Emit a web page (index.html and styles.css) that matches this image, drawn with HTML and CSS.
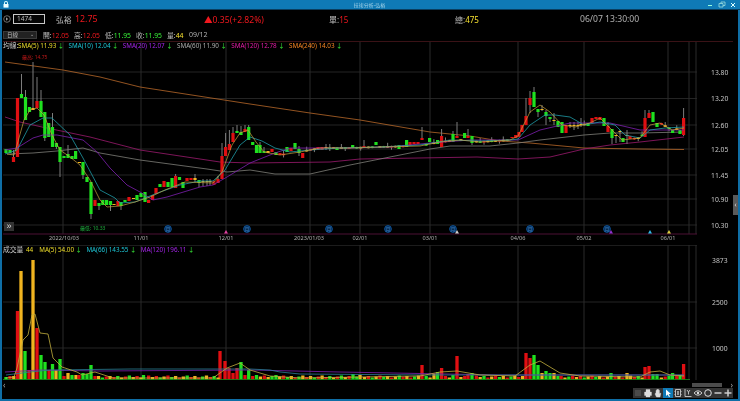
FILE: index.html
```html
<!DOCTYPE html>
<html lang="zh-Hant">
<head>
<meta charset="utf-8">
<title>技術分析-弘裕</title>
<link rel="stylesheet" href="styles.css">
</head>
<body>
<div class="window">
  <header class="titlebar">
    <svg class="lock" viewBox="0 0 6 7"><path d="M1 3V2a2 2 0 0 1 4 0v1h-1V2a1 1 0 0 0-2 0v1z" fill="#dff"/><rect x="0.5" y="3" width="5" height="3.6" fill="#eff"/></svg>
    <span class="title-text">技術分析-弘裕</span>
    <div class="winctl">
      <svg viewBox="0 0 30 8"><path d="M2 4.5h4" stroke="#9fd" stroke-width="1"/><path d="M13 2.5h4v3.5h-4zM15 2.5v-1.500h4v3.500h-2" fill="none" stroke="#9dd" stroke-width=".8"/><path d="M25 2l4 4M29 2l-4 4" stroke="#dff" stroke-width="1"/></svg>
    </div>
  </header>

  <section class="quote">
    <svg class="refresh" viewBox="0 0 8 8"><circle cx="4" cy="4" r="3.300" fill="none" stroke="#999" stroke-width=".7"/><path d="M3 2.300l2.200 1.700-2.200 1.700z" fill="#999"/></svg>
    <div class="code">1474</div>
    <span class="name">弘裕</span>
    <span class="price up">12.75</span>
    <span class="change up">▲0.35(+2.82%)</span>
    <span class="single"><i>單:</i><b class="up">15</b></span>
    <span class="total"><i>總:</i><b class="yellow">475</b></span>
    <span class="clock">06/07 13:30:00</span>
  </section>

  <section class="ohlc">
    <div class="period"><span>日線</span><em>⌄</em></div>
    <span class="o"><i>開:</i><b class="up">12.05</b></span>
    <span class="o"><i>高:</i><b class="up">12.05</b></span>
    <span class="o"><i>低:</i><b class="down">11.95</b></span>
    <span class="o"><i>收:</i><b class="down">11.95</b></span>
    <span class="o vol"><i>量:</i><b class="yellow">44</b></span>
    <span class="date">09/12</span>
  </section>

  <section class="pane price-pane">
    <svg id="price" class="chart" viewBox="2 41 736 204"></svg>
    <div class="legend price-legend">
      <span class="cap">均線:</span>
      <span class="c-y">SMA(5) 11.93<u>↓</u></span>
      <span class="c-c">SMA(10) 12.04<u>↓</u></span>
      <span class="c-p">SMA(20) 12.07<u>↓</u></span>
      <span class="c-g">SMA(60) 11.90<u>↓</u></span>
      <span class="c-m">SMA(120) 12.78<u>↓</u></span>
      <span class="c-o">SMA(240) 14.03<u>↓</u></span>
    </div>
    <button class="expand">»</button>
    <div class="vscroll">‹</div>
  </section>

  <section class="pane volume-pane">
    <svg id="volume" class="chart" viewBox="2 245 736 136"></svg>
    <div class="legend volume-legend">
      <span class="cap">成交量</span>
      <span class="c-y vol-now">44</span>
      <span class="c-y">MA(5) 54.00<u>↓</u></span>
      <span class="c-c">MA(66) 143.55<u>↓</u></span>
      <span class="c-p">MA(120) 196.11<u>↓</u></span>
    </div>
  </section>

  <footer class="bottom">
    <div class="scrollrow">
      <span class="sc-arrow">‹</span>
      <span class="thumb"></span>
      <span class="sc-arrow right">›</span>
    </div>
    <div class="toolrow">
      <div class="tools">
        <span class="tool"><svg viewBox="0 0 10 10"><rect x="2" y="2" width="6" height="6" fill="#4a4a4a"/></svg></span>
        <span class="tool"><svg viewBox="0 0 10 10"><path d="M3 4V1.500h4V4M1.500 4h7v3.500h-7zM3 6.500h4v2.500H3z" fill="#ddd" stroke="#ddd" stroke-width=".3"/></svg></span>
        <span class="tool"><svg viewBox="0 0 10 10"><path d="M3 5V2.500h.8V5V1.500h.9V5V1.500h.9V5V2.200h.8V6l.8-1 .6.400L7 9H3.500L2 6l.5-.8z" fill="#ddd" stroke="#ddd" stroke-width=".4"/></svg></span>
        <span class="tool active"><svg viewBox="0 0 10 10"><path d="M3 1.500v6.500l1.600-1.500L6 9l1-.5-1.300-2.500H8z" fill="#fff"/></svg></span>
        <span class="tool"><svg viewBox="0 0 10 10"><path d="M2.500 1.500h5v7h-5zM1.500 3.500h1M1.500 6.500h1M7.500 3.500h1M7.500 6.500h1" fill="none" stroke="#ccc" stroke-width=".9"/><rect x="4" y="3" width="2" height="4" fill="#999"/></svg></span>
        <span class="tool"><svg viewBox="0 0 10 10"><path d="M2 1v7.500h6.500M4 2l1.500 2L7 2M5.500 4v2.500" fill="none" stroke="#ccc" stroke-width=".9"/></svg></span>
        <span class="tool"><svg viewBox="0 0 10 10"><path d="M1 5q4-4.500 8 0q-4 4.500-8 0z" fill="none" stroke="#ddd" stroke-width=".9"/><circle cx="5" cy="5" r="1.200" fill="#ddd"/></svg></span>
        <span class="tool"><svg viewBox="0 0 10 10"><circle cx="5" cy="5" r="3.300" fill="none" stroke="#ddd" stroke-width="1"/></svg></span>
        <span class="tool"><svg viewBox="0 0 10 10"><path d="M1.500 5h7" stroke="#ccc" stroke-width="1.500"/></svg></span>
        <span class="tool"><svg viewBox="0 0 10 10"><path d="M1.500 5h7M5 1.500v7" stroke="#ccc" stroke-width="1.500"/></svg></span>
      </div>
    </div>
  </footer>
</div>
<script src="chart.js"></script>
</body>
</html>
```

FILE: styles.css
```css
* { box-sizing: border-box; }
html, body { margin: 0; padding: 0; background: #000; }
body { width: 740px; height: 401px; overflow: hidden; }

.window {
  width: 740px;
  height: 401px;
  display: flex;
  flex-direction: column;
  background: #000;
  border-left: 2px solid #0f6ea6;
  border-right: 2px solid #0f6ea6;
  border-bottom: 2px solid #0f6ea6;
  font-family: "Noto Sans", "Noto Sans CJK TC", sans-serif;
  color: #bcbcbc;
  filter: blur(0.3px);
}

i, b, u, em { font-style: normal; font-weight: normal; text-decoration: none; }
.up { color: #f0181e; }
.down { color: #38f038; }
.yellow { color: #f5e030; }

.titlebar {
  flex: 0 0 10px;
  margin: 0 -2px;
  padding: 0 4px 0 3px;
  display: grid;
  grid-template-columns: 1fr auto 1fr;
  align-items: center;
  background: #0f7ab6;
  border-bottom: 1px solid #0a3f60;
}
.lock { width: 6px; height: 7px; }
.title-text { font-size: 5px; line-height: 8px; color: #a0d0e6; }
.winctl { justify-self: end; }
.winctl svg { display: block; width: 30px; height: 8px; }

.quote {
  flex: 0 0 18px;
  display: flex;
  align-items: center;
  font-size: 8px;
}
.refresh { width: 8px; height: 8px; margin-left: 1px; flex: none; }
.code {
  width: 32px;
  height: 10px;
  margin-left: 2px;
  border: 1px solid #c8c8c8;
  background: #050505;
  color: #bbb;
  font-size: 6.500px;
  line-height: 8px;
  padding-left: 3px;
}
.name { margin-left: 11px; width: 19px; color: #bcbcbc; font-size: 7.800px; }
.price { width: 129px; font-size: 8.800px; }
.change { width: 125px; font-size: 8.600px; }
.single { width: 126px; }
.total { width: 125px; }
.clock { font-size: 8.600px; color: #b0b0b0; }

.ohlc {
  flex: 0 0 13px;
  display: flex;
  align-items: center;
  font-size: 6.800px;
  padding-left: 1px;
}
.period {
  width: 34px;
  height: 8px;
  margin-right: 6px;
  padding: 0 2px 0 3px;
  display: flex;
  justify-content: space-between;
  align-items: center;
  background: #222;
  border: 1px solid #3a3a3a;
  font-size: 5.500px;
  color: #bbb;
}
.period em { font-size: 5px; line-height: 5px; }
.o { width: 31px; white-space: nowrap; }
.o.vol { width: 22px; }
.date { font-size: 7px; color: #b0b0b0; }

.pane { position: relative; flex: none; }
.price-pane { height: 204px; }
.volume-pane { height: 136px; }
.chart { display: block; width: 736px; height: 100%; }
.ax { font-size: 6.800px; fill: #c4c4c4; }
.xl { font-size: 5.600px; fill: #b0b0b0; text-anchor: middle; }
.tiny { font-size: 5px; }

.legend {
  position: absolute;
  left: 1px;
  top: 0;
  display: flex;
  align-items: center;
  font-size: 6.300px;
  line-height: 10px;
  white-space: nowrap;
}
.legend span { margin-right: 4.500px; }
.legend .cap { margin-right: 0; color: #c8c8c8; font-size: 6.800px; width: 15px; }
.legend u { color: #38f038; margin-left: 1.500px; }
.volume-legend .cap { width: 23px; }
.volume-legend .vol-now { margin-right: 6px; }
.c-y { color: #ecdc2a; }
.c-c { color: #1cc4d4; }
.c-p { color: #a424e8; }
.c-g { color: #ababab; }
.c-m { color: #e61ca6; }
.c-o { color: #f58422; }

.expand {
  position: absolute;
  left: 2px;
  top: 181px;
  width: 10px;
  height: 9px;
  padding: 0;
  border: 0;
  background: #333;
  color: #ddd;
  font-size: 9px;
  line-height: 7px;
}
.vscroll {
  position: absolute;
  right: 0;
  top: 154px;
  width: 5px;
  height: 20px;
  background: #5a5a5a;
  color: #ddd;
  font-size: 7px;
  line-height: 20px;
  text-align: center;
}

.bottom { flex: 1; display: flex; flex-direction: column; min-height: 0; }
.scrollrow {
  flex: 0 0 7px;
  display: flex;
  align-items: center;
  padding-left: 1px;
  font-size: 8px;
  line-height: 7px;
  color: #aaa;
}
.thumb { width: 30px; height: 4px; margin-left: auto; background: #4c4c4c; }
.sc-arrow.right { margin-left: 9px; margin-right: 5px; }
.toolrow { flex: 1; display: flex; justify-content: flex-end; padding-right: 5px; }
.tools { display: flex; height: 10px; background: #333; }
.tool { width: 10px; height: 10px; display: block; }
.tool svg { display: block; width: 10px; height: 10px; }
.tool.active { background: #0f7ab6; }
```

FILE: chart.js
```js
(function () {
  var NS = "http://www.w3.org/2000/svg";
  var X0 = 6, STEP = 3.855, N = 177;
  var COL = { r: "#e00f12", g: "#1fe01f", o: "#f0b420", d: "#a81010" };

  function el(parent, tag, attrs, text) {
    var e = document.createElementNS(NS, tag);
    for (var k in attrs) e.setAttribute(k, attrs[k]);
    if (text) e.textContent = text;
    parent.appendChild(e);
    return e;
  }
  function line(svg, x1, y1, x2, y2, c, w) {
    el(svg, "line", { x1: x1, y1: y1, x2: x2, y2: y2, stroke: c, "stroke-width": w || 1 });
  }
  function poly(svg, pts, c, w) {
    el(svg, "polyline", {
      points: pts.map(function (p) { return p.join(","); }).join(" "),
      fill: "none", stroke: c, "stroke-width": w || 0.8, "stroke-linejoin": "round"
    });
  }
  function interp(pts, x) {
    for (var i = 1; i < pts.length; i++) {
      if (x <= pts[i][0]) {
        var a = pts[i - 1], b = pts[i];
        return a[1] + (b[1] - a[1]) * (x - a[0]) / (b[0] - a[0]);
      }
    }
    return pts[pts.length - 1][1];
  }

  var VX = [63, 141, 226, 310, 360, 430, 518, 584, 668, 689, 696];
  var XLABELS = [[64, "2022/10/03"], [141, "11/01"], [226, "12/01"], [309, "2023/01/03"], [360, "02/01"], [430, "03/01"], [518, "04/06"], [584, "05/02"], [668, "06/01"]];

  /* moving averages, in page pixels */
  var SMA240 = [[5, 62], [63, 70], [100, 77], [140, 87], [250, 104], [310, 113], [360, 120], [430, 132], [470, 136], [500, 141], [530, 143], [584, 148], [640, 149], [684, 149.5]];
  var SMA120 = [[5, 117], [20, 122], [42, 127], [90, 137], [140, 150], [220, 162], [250, 163], [330, 162], [360, 159], [477, 157], [518, 159], [550, 157], [584, 149], [610, 145], [640, 142], [684, 137]];
  var SMA60 = [[7, 154], [33, 153], [57, 151], [83, 148], [100, 153], [140, 160], [207, 169], [227, 172], [250, 170], [275, 174], [310, 174], [350, 165], [430, 149], [450, 146], [490, 146], [518, 143], [540, 140], [584, 135], [610, 133], [640, 133], [684, 132]];
  var SMA20 = [[5, 150], [17, 148], [33, 138], [43, 135], [57, 135], [83, 140], [97, 152], [110, 168], [127, 185], [140, 192], [153, 200], [167, 197], [200, 187], [213, 185], [227, 177], [250, 163], [275, 153], [290, 148], [350, 148], [390, 147], [430, 143], [470, 140], [518, 140], [540, 130], [570, 123], [610, 123], [640, 130], [660, 130], [684, 130]];
  var SMA10 = [[5, 154], [17, 150], [30, 125], [43, 118], [52, 118], [70, 135], [83, 158], [100, 190], [115, 198], [120, 203], [135, 202], [160, 192], [180, 185], [200, 181], [213, 181], [225, 170], [240, 145], [250, 137], [262, 141], [275, 148], [290, 152], [310, 150], [340, 148], [380, 147], [420, 145], [450, 140], [480, 141], [510, 140], [518, 139], [530, 125], [545, 115], [555, 115], [570, 117], [584, 125], [600, 122], [615, 125], [625, 135], [640, 138], [650, 130], [665, 128], [684, 127]];
  var SMA5 = [[7, 154], [14, 155], [17, 145], [24, 120], [30, 110], [37, 108], [44, 115], [52, 135], [60, 150], [70, 157], [80, 165], [90, 180], [100, 200], [107, 207], [120, 206], [135, 202], [150, 197], [165, 190], [185, 182], [213, 183], [222, 172], [232, 145], [240, 133], [248, 130], [256, 142], [264, 152], [280, 155], [300, 152], [320, 148], [350, 148], [380, 147], [420, 146], [440, 142], [460, 140], [480, 142], [510, 140], [518, 136], [530, 112], [540, 105], [550, 112], [562, 125], [575, 127], [590, 123], [600, 118], [612, 130], [622, 140], [640, 138], [650, 125], [660, 123], [672, 130], [684, 128]];

  /* candles: x, colour, body top, body bottom, wick top, wick bottom */
  var CANDLES = [
    [6, "g", 149, 153], [10, "g", 150, 153], [13.5, "r", 157, 162, 150, 162], [17.5, "r", 98, 157],
    [21.5, "g", 94, 98, 74, 98], [25.5, "g", 97, 120, 90, 120], [29.5, "g", 107, 112], [33, "o", 108, 110, 62, 110],
    [37, "r", 101, 108, 77, 108], [41, "g", 101, 117, 90, 117], [44.8, "g", 112, 138, 112, 141], [48.7, "g", 123, 137],
    [52.5, "g", 127, 147, 113, 147], [56.4, "g", 143, 147, 143, 149], [60, "g", 147, 162, 147, 177], [64, "g", 156, 158],
    [68, "g", 154, 158, 145, 158], [72, "g", 156, 159], [75.6, "g", 151, 159], [79.5, "o", 162, 163], [83, "g", 162, 175, 162, 179],
    [87, "g", 177, 182], [91, "g", 182, 214, 182, 219], [95, "r", 200, 206], [99, "g", 203, 206, 203, 210], [102.8, "g", 200, 205],
    [106.6, "g", 200, 205], [110.5, "g", 201, 205, 201, 211], [114, "o", 204, 205], [118, "r", 201, 206], [121, "g", 202, 206, 202, 210],
    [125, "g", 200, 202], [129, "r", 197, 201], [133.6, "o", 198, 199], [137, "g", 195, 200], [141, "g", 193, 197], [145, "g", 192, 202],
    [148.6, "r", 200, 203], [152.6, "r", 195, 200], [156, "r", 188, 194], [160, "g", 184, 187], [164, "r", 181, 187], [168, "g", 182, 187],
    [172, "g", 178, 187], [175.6, "r", 176, 188, 174, 188], [179.5, "g", 177, 180], [183, "g", 182, 188], [187, "r", 178, 181],
    [191, "r", 178, 180], [195, "o", 178, 180, 174, 182], [199, "g", 180, 183, 180, 187], [203, "o", 181, 182, 179, 186], [207, "o", 181, 182, 179, 186],
    [210, "o", 181, 182, 179, 185], [214, "d", 181, 185], [218, "r", 179, 183, 176, 183], [222, "r", 156, 179, 143, 179], [225.6, "r", 147, 156, 133, 156],
    [229.4, "r", 144, 150, 130, 150], [233, "r", 133, 142, 127, 142], [237, "g", 131, 133, 125, 133], [241, "g", 132, 135, 126, 135], [245, "r", 129, 132, 125, 132],
    [248.7, "g", 127, 140, 125, 140], [252.7, "g", 142, 145], [256.5, "g", 145, 153], [260, "g", 145, 153, 142, 153], [264, "g", 151, 153, 147, 153],
    [268, "o", 151, 153], [272, "r", 149, 152], [276, "g", 152, 155], [280, "r", 153, 155], [287, "g", 147, 152], [291, "r", 148, 151],
    [295, "g", 143, 149], [299, "g", 149, 153, 146, 156], [302.7, "r", 153, 158], [318, "r", 147, 150], [322, "r", 147, 150], [326, "o", 147, 148, 144, 150],
    [337, "g", 147, 150], [352.7, "g", 145, 148], [364, "r", 146, 148, 140, 148], [376, "g", 142, 145], [399, "g", 145, 149], [406.6, "g", 140, 147],
    [410, "r", 142, 145], [414, "r", 142, 144], [418, "r", 142, 144], [422, "r", 138, 140, 127, 140], [429.6, "g", 138, 142], [437.6, "g", 140, 144],
    [441.6, "r", 136, 147, 129, 147], [453, "g", 134, 142, 131, 142], [457, "r", 136, 138, 122, 138], [464.6, "g", 133, 138], [468, "r", 136, 138, 129, 138],
    [472, "g", 136, 143, 136, 145], [512, "r", 137, 138], [515.7, "r", 135, 138], [519, "r", 132, 137], [522, "r", 125, 132], [526, "r", 116, 125, 98, 125],
    [530, "r", 98, 105, 91, 113], [534, "g", 92, 107, 87, 107], [538, "g", 109, 112, 109, 117], [542, "o", 109, 110, 105, 111], [546, "g", 112, 116, 110, 125],
    [550, "g", 117, 119, 117, 122], [554, "o", 120, 121, 113, 125], [558, "g", 121, 127], [562, "g", 122, 133], [566, "r", 125, 133],
    [570, "o", 125, 126, 122, 128], [574, "o", 125, 126, 122, 130], [578, "o", 125, 126, 122, 129], [581, "o", 124, 125, 118, 127],
    [588, "g", 123, 126], [592, "r", 118, 123], [596, "r", 117, 119], [600, "r", 117, 120], [604, "g", 118, 126], [608, "r", 126, 132, 122, 132],
    [612, "g", 129, 138, 129, 144], [616, "o", 135, 136, 135, 143], [620, "o", 131, 132, 130, 142], [623, "g", 138, 142], [627, "o", 135, 136, 130, 144],
    [630, "r", 136, 139], [645, "r", 118, 137, 110, 137], [649, "r", 113, 118, 110, 118], [653, "g", 112, 122], [657, "g", 123, 127], [672.6, "g", 130, 133],
    [680, "g", 130, 134], [683.6, "r", 118, 135, 108, 136]
  ];

  /* volume bars: x, colour, top y */
  var VOLS = [
    [6, "g", 377], [10, "r", 376], [13.8, "o", 376], [17.5, "r", 311], [21, "o", 271], [25, "g", 351], [29, "r", 370], [33, "o", 260],
    [37, "r", 328], [41, "g", 355], [45, "g", 362], [49, "r", 370], [52.5, "g", 364], [56, "o", 370], [60, "g", 359], [64, "r", 376],
    [68, "o", 373], [72, "g", 375], [76, "o", 375], [79, "r", 375], [83, "g", 373], [87, "g", 374], [91, "g", 365], [95, "r", 376],
    [110, "o", 376], [143.5, "g", 375], [220, "r", 351], [225, "r", 361], [229, "r", 368], [233, "r", 373], [237, "r", 368], [241, "g", 362],
    [245, "r", 375], [248.7, "g", 370], [256.5, "g", 375], [276, "g", 375], [353, "g", 374], [360, "o", 375], [422, "r", 365], [434, "o", 374],
    [437.6, "g", 372], [441.6, "r", 368], [453, "g", 375], [457, "r", 356], [468, "r", 374], [472, "g", 373], [526, "r", 353], [530, "r", 358],
    [534, "g", 355], [538, "g", 365], [542, "o", 373], [546, "g", 371], [550, "g", 373], [554, "o", 373], [558, "g", 376], [611, "g", 373],
    [627, "o", 373], [645, "r", 367], [649, "r", 366], [653, "g", 374], [657, "g", 374], [672.6, "g", 373], [680, "g", 375], [683.6, "r", 364]
  ];
  var VMA5 = [[6, 378], [14, 377], [17, 368], [23, 340], [28, 335], [32, 315], [35, 314], [40, 333], [48, 334], [53, 358], [62, 367], [77, 372], [82, 375], [95, 372], [113, 378], [213, 378], [227, 368], [240, 363], [250, 370], [270, 376], [300, 378], [420, 376], [440, 372], [457, 371], [480, 375], [515, 376], [530, 365], [540, 361], [550, 367], [560, 373], [580, 376], [640, 377], [650, 372], [660, 371], [670, 375], [684, 376]];
  var VMA66 = [[6, 375], [30, 372], [50, 370], [130, 369], [250, 369], [270, 370], [280, 372], [300, 374], [430, 375], [560, 375], [684, 375]];
  var VMA120 = [[5, 372], [40, 370], [100, 371], [250, 370], [340, 372], [500, 375], [684, 375]];

  function slot(x) { return Math.round((x - X0) / STEP); }

  function drawPrice(svg) {
    [72, 98.5, 125, 149, 175, 199, 225].forEach(function (y) { line(svg, 3, y, 697, y, "#242424"); });
    VX.forEach(function (x) { line(svg, x, 41, x, 234, "#2a2a2a"); });
    line(svg, 3, 41.500, 733, 41.500, "#3a1216");
    line(svg, 3, 234, 697, 234, "#4d1035");
    el(svg, "text", { x: 22, y: 58.500, class: "tiny", fill: "#c01818" }, "最高: 14.75");
    el(svg, "text", { x: 80, y: 230, class: "tiny", fill: "#1fae3f" }, "最低: 10.33");

    poly(svg, SMA240, "#b8682a");
    poly(svg, SMA120, "#9c1a6e");
    poly(svg, SMA60, "#7f7f78");

    var used = {};
    CANDLES.forEach(function (c) { used[slot(c[0])] = 1; });
    var seq = ["g", "o", "r", "o", "g", "r", "o"];
    for (var i = 0; i < N; i++) {
      if (used[i]) continue;
      var x = X0 + i * STEP, y = interp(SMA5, x);
      CANDLES.push([x, seq[i % 7], y - 0.8, y + 0.8, y - (i % 3 ? 1 : 4), y + (i % 4 ? 1 : 3)]);
    }
    CANDLES.forEach(function (c) {
      var wt = c[4] === undefined ? c[2] : c[4], wb = c[5] === undefined ? c[3] : c[5];
      if (wt < c[2] || wb > c[3]) line(svg, c[0], wt, c[0], wb, "#7d7d7d");
      el(svg, "rect", { x: c[0] - 1.600, y: c[2], width: 3.200, height: c[3] - c[2], fill: COL[c[1]] });
    });

    poly(svg, SMA20, "#7d1fb0");
    poly(svg, SMA10, "#1f9aa6");
    poly(svg, SMA5, "#c9a23e", 0.7);

    [[13.8, 72], [13.2, 98.5], [12.6, 125], [12.05, 149], [11.45, 175], [10.9, 199], [10.3, 225]].forEach(function (t) {
      el(svg, "text", { x: 711, y: t[1] + 2.500, class: "ax" }, t[0].toFixed(2));
    });
    XLABELS.forEach(function (t) { el(svg, "text", { x: t[0], y: 240, class: "xl" }, t[1]); });

    [168, 247, 329, 388, 453, 530, 607].forEach(function (x) {
      el(svg, "circle", { cx: x, cy: 229, r: 3.400, fill: "#062a50", stroke: "#1060b0", "stroke-width": 0.8 });
      el(svg, "text", { x: x, y: 231, "font-size": 5, fill: "#3f80c0", "text-anchor": "middle" }, "月");
    });
    [[226, "#e040a0"], [457, "#d0d0d0"], [611, "#9030d0"], [650, "#30b8e8"], [669, "#e0d040"]].forEach(function (t) {
      el(svg, "path", { d: "M" + (t[0] - 2) + " 233.500h4l-2-3.500z", fill: t[1] });
    });
  }

  function drawVolume(svg) {
    [302, 348].forEach(function (y) { line(svg, 3, y, 697, y, "#242424"); });
    line(svg, 3, 245.500, 697, 245.500, "#1c1c1c");
    VX.forEach(function (x) { line(svg, x, 245, x, 380, "#2a2a2a"); });

    var used = {};
    VOLS.forEach(function (v) { used[slot(v[0])] = 1; });
    var seq = ["o", "r", "o", "g", "r", "o", "r", "g", "o", "r", "g"];
    for (var i = 0; i < N; i++) {
      if (used[i]) continue;
      var h = 1.500 + (i * 7 % 5) * 0.5;
      VOLS.push([X0 + i * STEP, seq[i % 11], 379 - h]);
    }
    VOLS.forEach(function (v) {
      el(svg, "rect", { x: v[0] - 1.650, y: v[2], width: 3.300, height: 379.500 - v[2], fill: COL[v[1]] });
    });
    line(svg, 3, 379.500, 690, 379.500, "#1a8f1a", 0.8);

    poly(svg, VMA120, "#7d1fb0", 0.8);
    poly(svg, VMA66, "#2a7f96", 0.8);
    poly(svg, VMA5, "#c2ad3c", 0.8);

    [[3873, 260], [2500, 302], [1000, 348]].forEach(function (t) {
      el(svg, "text", { x: 712, y: t[1] + 2.500, class: "ax" }, String(t[0]));
    });
  }

  drawPrice(document.getElementById("price"));
  drawVolume(document.getElementById("volume"));
})();
```
